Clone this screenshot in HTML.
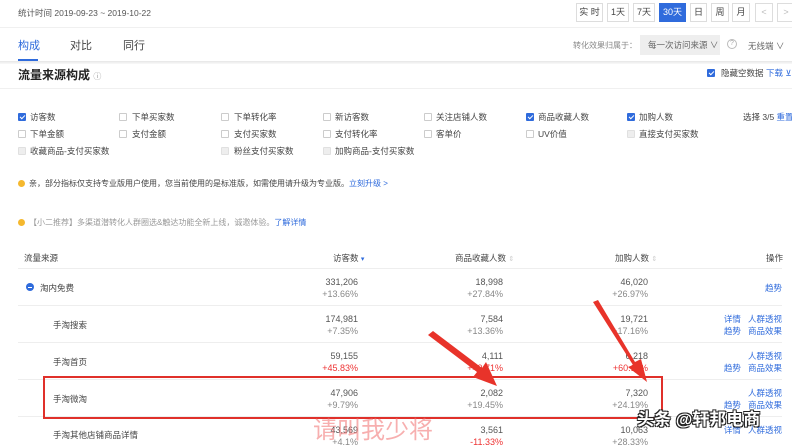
<!DOCTYPE html>
<html><head><meta charset="utf-8"><style>
*{margin:0;padding:0;box-sizing:border-box}
body{width:792px;height:439px;overflow:hidden;background:#fff;font-family:"Liberation Sans","Noto Sans CJK SC",sans-serif;font-size:9px;color:#333;position:relative}
.a{position:absolute;white-space:nowrap}
.btn{position:absolute;top:3px;height:19px;border:1px solid #ddd;font-size:9px;line-height:17px;text-align:center;color:#444;background:#fff}
.cb{position:absolute;width:8px;height:8px;border:1px solid #ccc;border-radius:1px;background:#fff}
.cb.on{background:#2f6bdc;border-color:#2f6bdc}
.cb.on:after{content:"";position:absolute;left:2px;top:0px;width:2px;height:4px;border:solid #fff;border-width:0 1.3px 1.3px 0;transform:rotate(45deg)}
.cb.dis{background:#eee;border-color:#e0e0e0}
.lbl{position:absolute;font-size:8.5px;color:#444;white-space:nowrap}
.blue{color:#2f6bdc}
.num{position:absolute;text-align:right;font-size:9px;color:#555;line-height:12px;white-space:nowrap}
.num i{font-style:normal;color:#888}
.num i.r{color:#e33}
.line{position:absolute;left:18px;right:10px;height:1px;background:#eee}
.ops{position:absolute;font-size:8.5px;color:#2f6bdc;text-align:right;line-height:12px;right:10px;white-space:nowrap}
</style></head><body>
<div class="a" style="left:18px;top:7px;font-size:8.5px;color:#555">统计时间 2019-09-23 ~ 2019-10-22</div>
<div class="btn" style="left:576px;width:27px">实 时</div>
<div class="btn" style="left:607px;width:22px">1天</div>
<div class="btn" style="left:633px;width:22px">7天</div>
<div class="btn" style="left:659px;width:27px;background:#2f6bdc;border-color:#2f6bdc;color:#fff">30天</div>
<div class="btn" style="left:690px;width:17px">日</div>
<div class="btn" style="left:711px;width:18px">周</div>
<div class="btn" style="left:732px;width:18px">月</div>
<div class="btn" style="left:755px;width:18px;color:#bbb">&lt;</div>
<div class="btn" style="left:777px;width:18px;color:#bbb">&gt;</div>
<div style="position:absolute;left:0;right:0;top:27px;height:1px;background:#f0f0f0"></div>
<div class="a" style="left:18px;top:37px;font-size:11px;color:#2f6bdc">构成</div>
<div style="position:absolute;left:18px;top:59px;width:20px;height:2px;background:#2f6bdc"></div>
<div class="a" style="left:70px;top:37px;font-size:11px;color:#444">对比</div>
<div class="a" style="left:123px;top:37px;font-size:11px;color:#444">同行</div>
<div class="a" style="left:573px;top:40px;font-size:8px;color:#888">转化效果归属于：</div>
<div class="a" style="left:640px;top:35px;width:80px;height:20px;background:#eee;font-size:8.5px;color:#666;line-height:20px;padding-left:8px">每一次访问来源 ∨</div>
<div class="a" style="left:727px;top:39px;width:10px;height:10px;border:1px solid #bbb;border-radius:50%;font-size:7px;color:#aaa;text-align:center;line-height:8px">?</div>
<div class="a" style="left:748px;top:40px;font-size:8.5px;color:#666">无线端 ∨</div>
<div style="position:absolute;left:0;right:0;top:61px;height:3px;background:linear-gradient(#e6e6e6,#fafafa)"></div>
<div class="a" style="left:18px;top:66px;font-size:12px;font-weight:bold;color:#222">流量来源构成 <span style="font-size:8px;color:#999;font-weight:normal">ⓘ</span></div>
<div class="cb on" style="left:707px;top:69px"></div>
<div class="lbl" style="left:721px;top:67px">隐藏空数据</div>
<div class="lbl blue" style="left:766px;top:67px">下载 ⊻</div>
<div style="position:absolute;left:0;right:0;top:88px;height:1px;background:#f0f0f0"></div>

<div class="cb on" style="left:18px;top:113px"></div><div class="lbl" style="left:30px;top:111px">访客数</div>
<div class="cb" style="left:119px;top:113px"></div><div class="lbl" style="left:132px;top:111px">下单买家数</div>
<div class="cb" style="left:221px;top:113px"></div><div class="lbl" style="left:234px;top:111px">下单转化率</div>
<div class="cb" style="left:323px;top:113px"></div><div class="lbl" style="left:335px;top:111px">新访客数</div>
<div class="cb" style="left:424px;top:113px"></div><div class="lbl" style="left:436px;top:111px">关注店铺人数</div>
<div class="cb on" style="left:526px;top:113px"></div><div class="lbl" style="left:538px;top:111px">商品收藏人数</div>
<div class="cb on" style="left:627px;top:113px"></div><div class="lbl" style="left:639px;top:111px">加购人数</div>
<div class="lbl" style="left:743px;top:111px">选择 3/5 <span class="blue">重置</span></div>

<div class="cb" style="left:18px;top:130px"></div><div class="lbl" style="left:30px;top:128px">下单金额</div>
<div class="cb" style="left:119px;top:130px"></div><div class="lbl" style="left:132px;top:128px">支付金额</div>
<div class="cb" style="left:221px;top:130px"></div><div class="lbl" style="left:234px;top:128px">支付买家数</div>
<div class="cb" style="left:323px;top:130px"></div><div class="lbl" style="left:335px;top:128px">支付转化率</div>
<div class="cb" style="left:424px;top:130px"></div><div class="lbl" style="left:436px;top:128px">客单价</div>
<div class="cb" style="left:526px;top:130px"></div><div class="lbl" style="left:538px;top:128px">UV价值</div>
<div class="cb dis" style="left:627px;top:130px"></div><div class="lbl" style="left:639px;top:128px">直接支付买家数</div>

<div class="cb dis" style="left:18px;top:147px"></div><div class="lbl" style="left:30px;top:145px">收藏商品-支付买家数</div>
<div class="cb dis" style="left:221px;top:147px"></div><div class="lbl" style="left:234px;top:145px">粉丝支付买家数</div>
<div class="cb dis" style="left:323px;top:147px"></div><div class="lbl" style="left:335px;top:145px">加购商品-支付买家数</div>

<div class="a" style="left:18px;top:180px;width:7px;height:7px;border-radius:50%;background:#f5b82e"></div>
<div class="lbl" style="left:29px;top:178px;font-size:8px">亲，部分指标仅支持专业版用户使用，您当前使用的是标准版，如需使用请升级为专业版。<span class="blue">立刻升级 &gt;</span></div>
<div class="a" style="left:18px;top:219px;width:7px;height:7px;border-radius:50%;background:#f5b82e"></div>
<div class="lbl" style="left:29px;top:217px;font-size:8px;color:#999">【小二推荐】多渠道潜转化人群圈选&amp;触达功能全新上线，诚邀体验。<span class="blue">了解详情</span></div>

<div class="lbl" style="left:24px;top:252px">流量来源</div>
<div class="lbl" style="left:333px;top:252px">访客数 <span class="blue" style="font-size:7px">▾</span></div>
<div class="lbl" style="left:455px;top:252px">商品收藏人数 <span style="color:#ccc;font-size:7px">⇕</span></div>
<div class="lbl" style="left:615px;top:252px">加购人数 <span style="color:#ccc;font-size:7px">⇕</span></div>
<div class="lbl" style="left:766px;top:252px">操作</div>
<div class="line" style="top:268px"></div>

<div class="a" style="left:26px;top:283px;width:8px;height:8px;border-radius:50%;background:#2f6bdc"><div style="margin:3.5px 2px;height:1px;background:#fff"></div></div>
<div class="lbl" style="left:40px;top:282px">淘内免费</div>
<div class="num" style="right:434px;top:276px">331,206<br><i>+13.66%</i></div>
<div class="num" style="right:289px;top:276px">18,998<br><i>+27.84%</i></div>
<div class="num" style="right:144px;top:276px">46,020<br><i>+26.97%</i></div>
<div class="ops" style="top:282px">趋势</div>
<div class="line" style="top:305px"></div>

<div class="lbl" style="left:53px;top:319px">手淘搜索</div>
<div class="num" style="right:434px;top:313px">174,981<br><i>+7.35%</i></div>
<div class="num" style="right:289px;top:313px">7,584<br><i>+13.36%</i></div>
<div class="num" style="right:144px;top:313px">19,721<br><i>+17.16%</i></div>
<div class="ops" style="top:313px">详情&nbsp;&nbsp; 人群透视<br>趋势&nbsp;&nbsp; 商品效果</div>
<div class="line" style="top:342px"></div>

<div class="lbl" style="left:53px;top:356px">手淘首页</div>
<div class="num" style="right:434px;top:350px">59,155<br><i class="r">+45.83%</i></div>
<div class="num" style="right:289px;top:350px">4,111<br><i class="r">+49.71%</i></div>
<div class="num" style="right:144px;top:350px">6,218<br><i class="r">+60.11%</i></div>
<div class="ops" style="top:350px">人群透视<br>趋势&nbsp;&nbsp; 商品效果</div>
<div class="line" style="top:379px"></div>

<div class="lbl" style="left:53px;top:393px">手淘微淘</div>
<div class="num" style="right:434px;top:387px">47,906<br><i>+9.79%</i></div>
<div class="num" style="right:289px;top:387px">2,082<br><i>+19.45%</i></div>
<div class="num" style="right:144px;top:387px">7,320<br><i>+24.19%</i></div>
<div class="ops" style="top:387px">人群透视<br>趋势&nbsp;&nbsp; 商品效果</div>
<div class="line" style="top:416px"></div>

<div class="lbl" style="left:53px;top:429px">手淘其他店铺商品详情</div>
<div class="num" style="right:434px;top:424px">43,569<br><i>+4.1%</i></div>
<div class="num" style="right:289px;top:424px">3,561<br><i class="r">-11.33%</i></div>
<div class="num" style="right:144px;top:424px">10,063<br><i>+28.33%</i></div>
<div class="ops" style="top:424px">详情&nbsp;&nbsp; 人群透视</div>

<div style="position:absolute;left:43px;top:376px;width:620px;height:43px;border:2px solid #e0302a"></div>
<svg style="position:absolute;left:0;top:0" width="792" height="439">
<polygon points="428,335 433,331 482,368 486,362 497,386 473,377 477,372" fill="#e8332a"/>
<polygon points="593,302 598,300 635,362 641,359 647,382 628,367 633,365" fill="#e8332a"/>
</svg>
<div class="a" style="left:313px;top:410px;font-size:24px;color:rgba(240,110,110,0.55)">请叫我少将</div>
<div class="a" style="left:637px;top:405px;font-size:17px;color:#fff;text-shadow:-1px -1px 0 #222,1px -1px 0 #222,-1px 1px 0 #222,1px 1px 0 #222;font-weight:bold">头条 @轩邦电商</div>
</body></html>
